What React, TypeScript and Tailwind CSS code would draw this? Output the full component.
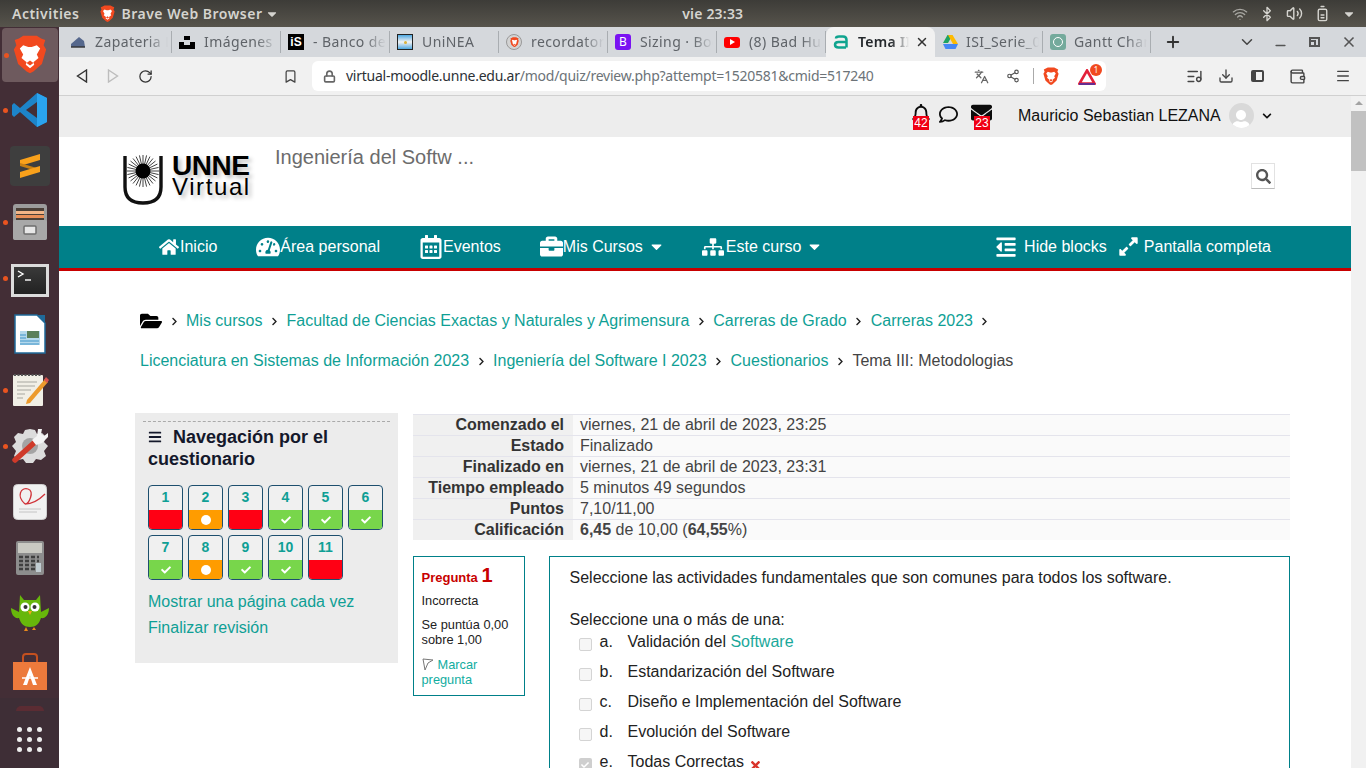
import React from "react";
import {
  FaHome, FaTachometerAlt, FaRegCalendarAlt, FaBriefcase, FaSitemap, FaCaretDown, FaOutdent, FaExpandAlt,
  FaFolderOpen, FaSearch, FaBars, FaCheck, FaRegBell, FaRegComment, FaEnvelope, FaChevronDown, FaChevronRight, FaTimes, FaUser,
} from "react-icons/fa";
import { Volume2, Bluetooth, Wifi, BatteryMedium, ChevronDown, Plus, Minus, X, Languages, Share2, Lock, Bookmark, RotateCw, Download, ListMusic, Wallet, Menu } from "lucide-react";

const Lion = ({ s = 20 }: { s?: number }) => (
  <svg width={s} height={s * 1.15} viewBox="0 0 40 46">
    <path d="M20 1 L28 1 L33 4 L38 6 L36 12 L39 17 L34 34 L24 43 L20 45 L16 43 L6 34 L1 17 L4 12 L2 6 L7 4 L12 1 Z" fill="#f1491f" />
    <path d="M12 12 L18 14 L22 14 L28 12 L32 16 L28 23 L30 27 L24 32 L25 35 L20 39 L15 35 L16 32 L10 27 L12 23 L8 16 Z" fill="#fff" />
    <path d="M16 33 L20 30 L24 33 L20 36 Z" fill="#f1491f" />
  </svg>
);

const Tab = ({ icon, label, active, narrow, tight }: { icon: React.ReactNode; label: string; active?: boolean; narrow?: boolean; tight?: boolean }) => {
  if (active) {
    return (
      <div className="w-[109px] h-[30px] bg-[#f1f1f1] rounded-t-lg flex items-center pl-[7px] shrink-0">
        <span className="w-4 h-4 flex items-center justify-center shrink-0">{icon}</span>
        <span className="ml-[9px] -mt-[1px] w-[51px] overflow-hidden whitespace-nowrap text-[14px] tracking-[0.3px] font-semibold text-[#24282c] [mask-image:linear-gradient(90deg,#000_65%,transparent)]">{label}</span>
        <X size={14} strokeWidth={2.5} className="ml-[6px] text-[#333]" />
      </div>
    );
  }
  return (
    <div className={narrow ? "w-[108px] h-[22px] mt-[4px] border-r border-[#a9adb1] flex items-center pl-[7px] shrink-0" : "w-[109px] h-[22px] mt-[4px] border-r border-[#a9adb1] flex items-center pl-[7px] shrink-0"}>
      <span className="w-4 h-4 flex items-center justify-center shrink-0">{icon}</span>
      <span className={tight ? "ml-[8px] -mt-[1px] w-[73px] overflow-hidden whitespace-nowrap text-[14px] tracking-[0.4px] text-[#5f6368] [mask-image:linear-gradient(90deg,#000_72%,transparent)]" : "ml-[9px] -mt-[1px] w-[73px] overflow-hidden whitespace-nowrap text-[14px] tracking-[0.4px] text-[#5f6368] [mask-image:linear-gradient(90deg,#000_72%,transparent)]"}>{label}</span>
    </div>
  );
};

const Dot = () => <span className="absolute left-[3px] top-1/2 -mt-[2px] w-[5px] h-[5px] rounded-full bg-[#e95420]" />;

const DockItem = ({ dot, children, h = "h-[56px]" }: { dot?: boolean; children: React.ReactNode; h?: string }) => (
  <div className={`relative w-[59px] ${h} flex items-center justify-center`}>
    {dot && <Dot />}
    {children}
  </div>
);

const Dock = () => (
  <div className="w-[59px] shrink-0 bg-[#432e36] flex flex-col items-center">
    <div className="relative w-[56px] h-[54px] mt-[1px] rounded bg-[#6e5a5e] flex items-center justify-center">
      <span className="absolute left-[2px] top-[25px] w-[5px] h-[5px] rounded-full bg-[#e95420]" />
      <Lion s={34} />
    </div>
    <DockItem dot>
      <svg width="36" height="36" viewBox="0 0 36 36">
        <path d="M25 1 L35 6 V30 L25 35 L8 20 L2 25 L0 23 V13 L2 11 L8 16 Z" fill="#1d84c9" />
        <path d="M25 1 L35 6 V30 L25 35 Z" fill="#2aa3ee" />
        <path d="M25 10 L14 18 L25 26 Z" fill="#432e36" />
      </svg>
    </DockItem>
    <DockItem>
      <div className="w-[40px] h-[40px] rounded bg-[#3e3e3e] flex items-center justify-center">
        <svg width="22" height="26" viewBox="0 0 22 26">
          <path d="M21 1 L1 7 V13 L21 7 Z" fill="#f9a11b" />
          <path d="M1 10 V13 L21 19 V16 Z" fill="#c87f12" />
          <path d="M21 13 L1 19 V25 L21 19 Z" fill="#f9a11b" />
        </svg>
      </div>
    </DockItem>
    <DockItem dot>
      <svg width="36" height="38" viewBox="0 0 36 38">
        <rect x="1" y="1" width="34" height="36" rx="3" fill="#9c9c9c" />
        <rect x="4" y="5" width="28" height="12" fill="#4b4038" />
        <rect x="4" y="8" width="28" height="3" fill="#f2b487" />
        <rect x="4" y="12" width="28" height="3" fill="#e88e58" />
        <rect x="1" y="17" width="34" height="20" rx="2" fill="#a8a8a8" />
        <rect x="12" y="23" width="12" height="8" rx="1" fill="#e7e7e7" stroke="#6e6e6e" strokeWidth="1.5" />
      </svg>
    </DockItem>
    <DockItem dot>
      <div className="mt-[4px] w-[38px] h-[33px] bg-[#dcdcdc] p-[3px]">
        <div className="w-full h-full bg-gradient-to-b from-[#3a3a3a] to-[#222] relative">
          <svg width="20" height="16" viewBox="0 0 20 16" className="absolute left-[3px] top-[3px]">
            <path d="M1 1 L6 4 L1 7" fill="none" stroke="#fff" strokeWidth="1.4" />
            <path d="M8 10 H14" stroke="#fff" strokeWidth="1.4" />
          </svg>
        </div>
      </div>
    </DockItem>
    <DockItem>
      <svg width="32" height="40" viewBox="0 0 32 40">
        <path d="M1 1 H23 L31 9 V39 H1 Z" fill="#fff" stroke="#1f6a99" strokeWidth="1.5" />
        <path d="M23 1 L31 1 V9 Z" fill="#1f6a99" />
        <rect x="6" y="17" width="20" height="14" fill="#b4d8ec" />
        <rect x="13" y="17" width="12" height="7" fill="#5a7f5a" />
        <path d="M6 21 H12 M6 24 H12 M6 27 H25 M6 30 H25" stroke="#3f93c7" strokeWidth="1.2" />
      </svg>
    </DockItem>
    <DockItem dot>
      <svg width="38" height="36" viewBox="0 0 38 36">
        <rect x="2" y="3" width="30" height="31" rx="1" fill="#f1efe6" />
        <path d="M3 3 H31" stroke="#555" strokeWidth="2" strokeDasharray="2 1.5" />
        <path d="M6 10 H26 M6 14 H24 M6 18 H20 M6 22 H14 M6 26 H12" stroke="#a8a8a0" strokeWidth="1.2" />
        <path d="M16 28 L34 7 L37 10 L19 31 L15 32 Z" fill="#ec9a2c" />
        <path d="M33 8 L35 5 L38 8 L36 11 Z" fill="#d9534f" />
      </svg>
    </DockItem>
    <DockItem dot>
      <svg width="38" height="36" viewBox="0 0 38 36">
        <path d="M19 1 L24 2 L26 6 L31 5 L35 9 L33 14 L37 18 L33 23 L35 28 L30 32 L25 31 L22 35 H15 L12 31 L7 32 L3 28 L5 23 L1 18 L5 14 L3 9 L7 5 L12 6 L14 2 Z" fill="#dcdcdc" />
        <circle cx="19" cy="18" r="8" fill="#a4a4a4" />
        <path d="M4 32 L24 14" stroke="#cf3a2a" strokeWidth="5.5" strokeLinecap="round" />
        <path d="M21 12 L26 8 L27 1 L31 1 L30 6 L33 8 L37 5 L37 9 L31 15 L25 17 Z" fill="#f4f4f4" />
      </svg>
    </DockItem>
    <DockItem>
      <svg width="34" height="36" viewBox="0 0 34 36">
        <rect x="0.5" y="0.5" width="33" height="35" rx="4" fill="#f1f1f1" stroke="#cfcfcf" />
        <path d="M12 20 C3 12 8 3 15 5 C22 7 16 20 12 20 C18 20 26 16 32 10" fill="none" stroke="#d0343a" strokeWidth="1.3" />
        <path d="M6 25 H28 M6 28 H24" stroke="#c4c4c4" strokeWidth="1" />
      </svg>
    </DockItem>
    <DockItem>
      <svg width="30" height="36" viewBox="0 0 30 36">
        <rect x="1" y="1" width="28" height="34" rx="2" fill="#8d8d8d" />
        <rect x="3" y="3" width="24" height="10" fill="#c9c9c2" />
        <path d="M4 17 H24 M4 21 H24 M4 25 H24 M4 29 H24" stroke="#3f3f3f" strokeWidth="2.5" strokeDasharray="4 2" />
        <rect x="21" y="23" width="5" height="9" fill="#c2cdd2" />
      </svg>
    </DockItem>
    <DockItem>
      <svg width="40" height="40" viewBox="0 0 40 40">
        <path d="M10 1 L14 6 H26 L30 1 L31 18 L39 14 C39 21 35 25 31 24 C29 30 26 33 20 33 C14 33 11 30 9 24 C5 25 1 21 1 14 L9 18 Z" fill="#67b70b" />
        <circle cx="15" cy="13" r="4.5" fill="#fff" /><circle cx="25" cy="13" r="4.5" fill="#fff" />
        <circle cx="15.5" cy="13" r="2" fill="#333" /><circle cx="24.5" cy="13" r="2" fill="#333" />
        <path d="M18 17 H22 L20 21 Z" fill="#f2a91c" />
        <path d="M16 33 L14 37 H18 Z M24 33 L22 36 H26 Z" fill="#e8891c" />
      </svg>
    </DockItem>
    <DockItem>
      <svg width="36" height="38" viewBox="0 0 36 38" className="mt-[4px]">
        <path d="M11 9 V4 Q11 1 14 1 H22 Q25 1 25 4 V9" fill="none" stroke="#c4501f" strokeWidth="2" />
        <path d="M1 9 H35 V37 H1 Z" fill="#ec7a3c" />
        <path d="M18 14 L25 32 H21 L18 23 L15 32 H11 Z" fill="#fff" />
        <path d="M10 25 H26" stroke="#fff" strokeWidth="1.5" />
      </svg>
    </DockItem>
    <div className="w-[59px] flex-1 relative flex items-center justify-center bg-[#3e2e36] pt-[12px]">
      <span className="absolute left-[16px] top-[8px] w-[28px] h-[5px] rounded-t-full bg-[#5b2c33]" />
      <div className="grid grid-cols-3 gap-x-[5px] gap-y-[5px]">
        {[0, 1, 2, 3, 4, 5, 6, 7, 8].map((i) => (
          <span key={i} className="w-[5px] h-[5px] rounded-full bg-[#eeeeee]" />
        ))}
      </div>
    </div>
  </div>
);

const Topbar = () => (
  <div className="h-[27px] shrink-0 bg-gradient-to-b from-[#3d3c38] to-[#57544c] flex items-center text-[#d5d4cf] font-['Noto_Sans',sans-serif] font-semibold text-[14px] tracking-[0.5px] relative">
    <span className="ml-[12px]">Activities</span>
    <span className="ml-[21px] flex items-center"><Lion s={15} /></span>
    <span className="ml-[6px]">Brave Web Browser</span>
    <FaCaretDown size={14} className="ml-[3px]" />
    <span className="flex-1 text-center pr-[86px] tracking-[0.2px]">vie 23:33</span>
    <div className="flex items-center gap-[11px] pr-[10px]">
      <Wifi size={16} className="text-[#a9a8a3]" />
      <Bluetooth size={16} />
      <Volume2 size={17} />
      <BatteryMedium size={17} className="-rotate-90" />
      <FaCaretDown size={14} />
    </div>
  </div>
);

const TabStrip = () => (
  <div className="h-[30px] shrink-0 bg-[#d5d8dc] flex items-start pl-[4px] font-['Noto_Sans',sans-serif]">
    <Tab label="Zapateria López" icon={<svg width="16" height="14" viewBox="0 0 16 14"><path d="M1 12 L1 9 L9 2 L14 6 L15 12 Z" fill="#56688d" /><path d="M1 12 H15" stroke="#333" strokeWidth="1.4" /></svg>} />
    <Tab label="Imágenes de" icon={<svg width="16" height="13" viewBox="0 0 16 13"><path d="M5 0 H11 V4 H5 Z M0 6 H5 V9 H11 V6 H16 V13 H0 Z" fill="#000" /></svg>} />
    <Tab label="- Banco de" icon={<span className="w-4 h-4 bg-black text-white text-[12px] font-bold leading-4 text-center font-['Liberation_Sans',sans-serif]">iS</span>} />
    <Tab label="UniNEA" icon={<span className="w-4 h-4 border border-[#222] bg-gradient-to-b from-[#4aa8e0] via-[#f3f3f3] to-[#4aa8e0] flex items-center justify-center"><span className="w-[3px] h-[3px] rounded-full bg-[#d9b13b]" /></span>} />
    <Tab label="recordatorio" icon={<span className="w-4 h-4 rounded-full border border-[#999] bg-[#d3d3d3] flex items-center justify-center"><Lion s={9} /></span>} />
    <Tab label="Sizing · Bootstrap" icon={<span className="w-4 h-4 rounded-[3px] bg-[#7a12f2] text-white text-[12px] leading-4 text-center">B</span>} />
    <Tab label="(8) Bad Hus" icon={<span className="w-4 h-[11px] rounded-[3px] bg-[#f00] flex items-center justify-center"><span className="border-l-[5px] border-l-white border-y-[3px] border-y-transparent" /></span>} />
    <Tab active label="Tema III: Meto" icon={<svg width="16" height="14" viewBox="0 0 16 14"><path d="M3 3.5 Q3 1.5 6 1.5 H10 Q13.5 1.5 13.5 5 V12.5 M13 7 H5.5 Q2 7 2 9.8 Q2 12.5 5.5 12.5 H13" fill="none" stroke="#10a48f" strokeWidth="2.5" /></svg>} />
    <Tab narrow tight label="ISI_Serie_04" icon={<svg width="16" height="14" viewBox="0 0 16 14"><path d="M5.5 0 H10.5 L6 8 H1 Z" fill="#1ea362" /><path d="M10.5 0 L16 9 H11 L6 0 Z" fill="#ffba00" /><path d="M1 9 H16 L13.5 14 H3.5 Z" fill="#4687f4" /></svg>} />
    <Tab narrow tight label="Gantt Chart" icon={<span className="w-4 h-4 rounded-[3px] bg-[#74aa9c] flex items-center justify-center"><span className="w-[10px] h-[10px] rounded-full border border-white" /></span>} />
    <Plus size={18} strokeWidth={2.5} className="ml-[13px] mt-[6px] text-[#333]" />
    <ChevronDown size={18} className="ml-[56px] mt-[6px] text-[#444]" />
    <Minus size={15} strokeWidth={2.5} className="ml-[17px] mt-[11px] text-[#555]" />
    <span className="ml-[21px] mt-[10px] w-[11px] h-[10px] border-2 border-[#555] relative"><span className="absolute -left-[2px] top-[1px] w-[7px] h-[7px] border-2 border-[#555] bg-[#d5d8dc]" /></span>
    <X size={16} strokeWidth={2.5} className="ml-[21px] mt-[7px] text-[#555]" />
  </div>
);

const Toolbar = () => (
  <div className="h-[39px] shrink-0 bg-[#f1f1f1] border-b border-[#d0d0d0] flex items-center text-[#444] font-['Noto_Sans',sans-serif]">
    <svg width="12" height="14" viewBox="0 0 12 14" className="ml-[17px]"><path d="M10.5 1 L1.5 7 L10.5 13 Z" fill="none" stroke="#333" strokeWidth="1.4" /></svg>
    <svg width="12" height="14" viewBox="0 0 12 14" className="ml-[19px]"><path d="M1.5 1 L10.5 7 L1.5 13 Z" fill="none" stroke="#bdbdbd" strokeWidth="1.4" /></svg>
    <RotateCw size={15} strokeWidth={2} className="ml-[19px] text-[#333]" />
    <Bookmark size={15} strokeWidth={2} className="ml-[130px] text-[#444]" />
    <div className="ml-[14px] w-[794px] h-[30px] bg-white rounded-md flex items-center">
      <Lock size={13} strokeWidth={3} className="ml-[11px] text-[#666]" />
      <span className="ml-[10px] -mt-[1px] text-[14px] tracking-[-0.25px] whitespace-nowrap text-[#2c3136]">virtual-moodle.unne.edu.ar<span className="text-[#6c7378]">/mod/quiz/review.php?attempt=1520581&amp;cmid=517240</span></span>
      <Languages size={15} className="ml-auto text-[#666]" />
      <Share2 size={14} className="ml-[17px] text-[#555]" />
      <span className="ml-[13px] w-px h-[16px] bg-[#aaa]" />
      <span className="ml-[9px] flex"><Lion s={16} /></span>
      <span className="ml-[19px] mr-[4px] w-[24px] h-[20px] relative">
        <svg width="18" height="16" viewBox="0 0 18 16" className="absolute left-0 top-[3px]"><path d="M9 1.5 L16.5 14.5 H1.5 Z" fill="none" stroke="#e3213a" strokeWidth="2.6" /><path d="M1 15 H17" stroke="#662d91" strokeWidth="2" /></svg>
        <span className="absolute left-[12px] -top-[2px] w-[12px] h-[12px] rounded-full bg-[#f1491f] text-white text-[8px] leading-[12px] text-center">1</span>
      </span>
    </div>
    <ListMusic size={17} className="ml-[80px] text-[#444]" />
    <Download size={16} className="ml-[15px] text-[#444]" />
    <span className="ml-[17px] w-[13px] h-[12px] border-2 border-[#444] rounded-[2px] border-l-[5px]" />
    <Wallet size={17} className="ml-[25px] text-[#444]" />
    <Menu size={16} className="ml-[29px] text-[#444]" />
  </div>
);

const NavItem = ({ icon, label, caret }: { icon: React.ReactNode; label: string; caret?: boolean }) => (
  <span className="flex items-center whitespace-nowrap">
    {icon}
    <span>{label}</span>
    {caret && <FaCaretDown size={17} className="ml-[5px]" />}
  </span>
);

const Sep = () => <FaChevronRight size={9} className="mx-[7.5px] text-[#222]" />;
const Crumb = ({ children }: { children: React.ReactNode }) => <span className="text-[#0f9f95]">{children}</span>;

const cells: [string, "r" | "o" | "g"][] = [
  ["1", "r"], ["2", "o"], ["3", "r"], ["4", "g"], ["5", "g"], ["6", "g"],
  ["7", "g"], ["8", "o"], ["9", "g"], ["10", "g"], ["11", "r"],
];

const QCell = ({ n, k }: { n: string; k: "r" | "o" | "g" }) => (
  <div className="w-[35px] h-[45px] rounded-[4px] border border-[#1d4f6e] overflow-hidden flex flex-col bg-[#f0f0f0]">
    <div className="h-[24px] text-[14px] font-bold text-[#0f9f95] text-center leading-[22px]">{n}</div>
    <div className={k === "r" ? "flex-1 bg-[#ff0014]" : k === "o" ? "flex-1 bg-[#ff9c00] flex items-center justify-center" : "flex-1 bg-[#78d64b] flex items-center justify-center"}>
      {k === "o" && <span className="w-[10px] h-[10px] rounded-full bg-white" />}
      {k === "g" && <FaCheck size={10} className="text-white" />}
    </div>
  </div>
);

const Row = ({ th, children }: { th: string; children: React.ReactNode }) => (
  <div className="flex h-[21px] bg-[#fafafa] border-t border-[#e4e4ec] leading-[20px]">
    <div className="w-[160px] shrink-0 text-right font-bold pr-[9px] bg-[#f0f0f0] text-[#333]">{th}</div>
    <div className="pl-[7px] text-[#444]">{children}</div>
  </div>
);

const Choice = ({ l, children, checked }: { l: string; children: React.ReactNode; checked?: boolean }) => (
  <div className="flex items-center h-[30px] text-[#222]">
    <span className={checked ? "ml-[29px] w-[13px] h-[13px] mt-[5px] rounded-[2px] bg-[#cfcfcf] flex items-center justify-center" : "ml-[29px] w-[13px] h-[13px] mt-[5px] rounded-[2px] border border-[#d4d4d4] bg-[#f6f6f6]"}>
      {checked && <FaCheck size={8} className="text-white" />}
    </span>
    <span className="ml-[8px] w-[28px]">{l}</span>
    <span>{children}</span>
  </div>
);

const Page = () => (
  <div className="flex-1 flex min-h-0 bg-white font-['Liberation_Sans',sans-serif] text-[16px] overflow-hidden">
    <div className="flex-1 min-w-0 flex flex-col">
      <div className="h-[41px] shrink-0 bg-[#ededed] flex items-center pb-[2px] text-[#111]">
        <div className="relative ml-[852px] w-[18px] h-[24px]">
          <FaRegBell size={20} className="text-[#0c0c0c] absolute top-0 left-[0px]" />
          <span className="absolute left-[2px] top-[12px] w-[16px] h-[14px] bg-[#f00014] text-white text-[12px] leading-[14px] text-center">42</span>
        </div>
        <FaRegComment size={19} className="ml-[10px] -mt-[3px] text-[#0c0c0c]" />
        <div className="relative ml-[13px] w-[20px] h-[24px]">
          <FaEnvelope size={21} className="text-[#0c0c0c] absolute -top-[2px] left-0" />
          <span className="absolute left-[3px] top-[12px] w-[16px] h-[14px] bg-[#f00014] text-white text-[12px] leading-[14px] text-center">23</span>
        </div>
        <span className="ml-[27px]">Mauricio Sebastian LEZANA</span>
        <span className="ml-[8px] w-[25px] h-[25px] rounded-full bg-[#d9d9d9] flex items-end justify-center overflow-hidden"><FaUser size={20} className="text-white -mb-[2px]" /></span>
        <FaChevronDown size={10} className="ml-[8px]" />
      </div>
      <div className="h-[89px] shrink-0 flex items-start">
        <div className="ml-[63px] mt-[16px] w-[130px] h-[54px] relative flex">
          <svg width="44" height="54" viewBox="0 0 44 54" className="shrink-0">
            <path d="M3 3 V34 Q3 50 21 50 Q39 50 39 34 V3" fill="none" stroke="#111" strokeWidth="3.4" />
            <g stroke="#111" strokeWidth="0.8">
              {Array.from({ length: 28 }).map((_, i) => {
                const a = (i * Math.PI) / 14;
                return <line key={i} x1={21} y1={18} x2={21 + 16 * Math.cos(a)} y2={18 + 16 * Math.sin(a)} />;
              })}
            </g>
            <circle cx="21" cy="18" r="7.5" fill="#000" />
          </svg>
          <div className="ml-[6px] mt-[1px] text-black [text-shadow:3px_3px_4px_#bbb]">
            <div className="text-[28px] leading-[24px] font-bold tracking-[-0.5px]">UNNE</div>
            <div className="text-[24px] leading-[18px] tracking-[1.6px]">Virtual</div>
          </div>
        </div>
        <div className="ml-[23px] mt-[5px] text-[20px] text-[#6c6c6c]">Ingeniería del Softw ...</div>
        <div className="ml-auto mr-[76px] mt-[26px] w-[24px] h-[26px] border border-[#e2e2e2] border-b-[#bbb] flex items-center justify-center">
          <FaSearch size={15} className="text-[#555]" />
        </div>
      </div>
      <div className="h-[45px] shrink-0 bg-[#008089] border-b-[3px] border-[#c80000] flex items-center text-white pl-[100px] pb-[1px]">
        <NavItem icon={<FaHome size={20} className="mr-[1px]" />} label="Inicio" />
        <span className="ml-[39px]"><NavItem icon={<FaTachometerAlt size={24} />} label="Área personal" /></span>
        <span className="ml-[39px]"><NavItem icon={<FaRegCalendarAlt size={24} />} label="Eventos" /></span>
        <span className="ml-[39px]"><NavItem icon={<FaBriefcase size={23} />} label="Mis Cursos" caret /></span>
        <span className="ml-[37px]"><NavItem icon={<FaSitemap size={22} className="mr-[2px]" />} label="Este curso" caret /></span>
        <span className="ml-auto flex items-center"><FaOutdent size={22} className="mr-[7px]" />Hide blocks</span>
        <span className="ml-[11px] mr-[80px] flex items-center"><FaExpandAlt size={21} className="mr-[5px]" />Pantalla completa</span>
      </div>
      <div className="pl-[81px] pt-[38px] text-[#444]">
        <div className="flex items-center h-[24px]">
          <FaFolderOpen size={22} className="text-black" />
          <Sep /><Crumb>Mis cursos</Crumb><Sep /><Crumb>Facultad de Ciencias Exactas y Naturales y Agrimensura</Crumb><Sep /><Crumb>Carreras de Grado</Crumb><Sep /><Crumb>Carreras 2023</Crumb><Sep />
        </div>
        <div className="flex items-center h-[24px] mt-[16px]">
          <Crumb>Licenciatura en Sistemas de Información 2023</Crumb><Sep /><Crumb>Ingeniería del Software I 2023</Crumb><Sep /><Crumb>Cuestionarios</Crumb><Sep /><span>Tema III: Metodologias</span>
        </div>
      </div>
      <div className="flex items-start pl-[76px] pr-[61px] pt-[40px]">
        <aside className="w-[263px] h-[250px] shrink-0 bg-[#ececec] px-[13px] pt-[8px]">
          <div className="border-t border-dashed border-[#aaa] -mx-[5px]" />
          <div className="mt-[4px] text-[18px] leading-[22px] font-bold text-[#14182b]">
            <FaBars size={14} className="inline mr-[11px] -mt-[2px]" />Navegación por el cuestionario
          </div>
          <div className="mt-[15px] grid grid-cols-6 gap-x-[5px] gap-y-[5px] w-[235px]">
            {cells.map(([n, k]) => <QCell key={n} n={n} k={k} />)}
          </div>
          <div className="mt-[9px] text-[#0f9f95] leading-[26px]">
            <div>Mostrar una página cada vez</div>
            <div>Finalizar revisión</div>
          </div>
        </aside>
        <main className="ml-[15px] flex-1 min-w-0">
          <div className="mt-[1px] mb-[16px]">
            <Row th="Comenzado el">viernes, 21 de abril de 2023, 23:25</Row>
            <Row th="Estado">Finalizado</Row>
            <Row th="Finalizado en">viernes, 21 de abril de 2023, 23:31</Row>
            <Row th="Tiempo empleado">5 minutos 49 segundos</Row>
            <Row th="Puntos">7,10/11,00</Row>
            <Row th="Calificación"><b>6,45</b> de 10,00 (<b>64,55</b>%)</Row>
          </div>
          <div className="flex items-start">
            <div className="w-[112px] h-[140px] shrink-0 border border-[#008089] pl-[7.5px] pr-[8px] pt-[8px] text-[12.8px] leading-[15px] text-[#222]">
              <div className="font-bold text-[#c80000] leading-[20px] text-[13px]">Pregunta <span className="text-[20px]">1</span></div>
              <div className="mt-[5px]">Incorrecta</div>
              <div className="mt-[9px]">Se puntúa 0,00 sobre 1,00</div>
              <div className="mt-[10px] text-[#12ad9f]">
                <svg width="12" height="13" viewBox="0 0 12 13" className="inline -mt-[3px] mr-[4px]"><path d="M1 1 L11 2 L6 5 L3 12 Z" fill="none" stroke="#777" strokeWidth="1" /></svg>
                Marcar pregunta
              </div>
            </div>
            <div className="ml-[24px] flex-1 min-w-0 h-[260px] border border-[#008089] pl-[19.5px] pt-[11px] text-[#222]">
              <div className="leading-[20px]">Seleccione las actividades fundamentales que son comunes para todos los software.</div>
              <div className="mt-[22px] leading-[20px]">Seleccione una o más de una:</div>
              <div className="-mt-[3px] -ml-[20px]">
                <Choice l="a."><span>Validación del <span className="text-[#1aa89a]">Software</span></span></Choice>
                <Choice l="b.">Estandarización del Software</Choice>
                <Choice l="c.">Diseño e Implementación del Software</Choice>
                <Choice l="d.">Evolución del Software</Choice>
                <Choice l="e." checked><span>Todas Correctas <FaTimes size={13} className="inline text-[#d9342b] ml-[1px] -mb-[6px]" /></span></Choice>
              </div>
            </div>
          </div>
        </main>
      </div>
    </div>
    <div className="w-[15px] shrink-0 bg-[#f1f1f1] flex flex-col items-center">
      <span className="mt-[5px] border-x-[4px] border-x-transparent border-b-[4px] border-b-[#a3a3a3]" />
      <div className="mt-[6px] w-full h-[60px] bg-[#c1c1c1]" />
    </div>
  </div>
);

export default function App() {
  return (
    <div className="w-[1366px] h-[768px] overflow-hidden flex flex-col">
      <Topbar />
      <div className="flex-1 flex min-h-0">
        <Dock />
        <div className="flex-1 min-w-0 flex flex-col">
          <TabStrip />
          <Toolbar />
          <Page />
        </div>
      </div>
    </div>
  );
}
